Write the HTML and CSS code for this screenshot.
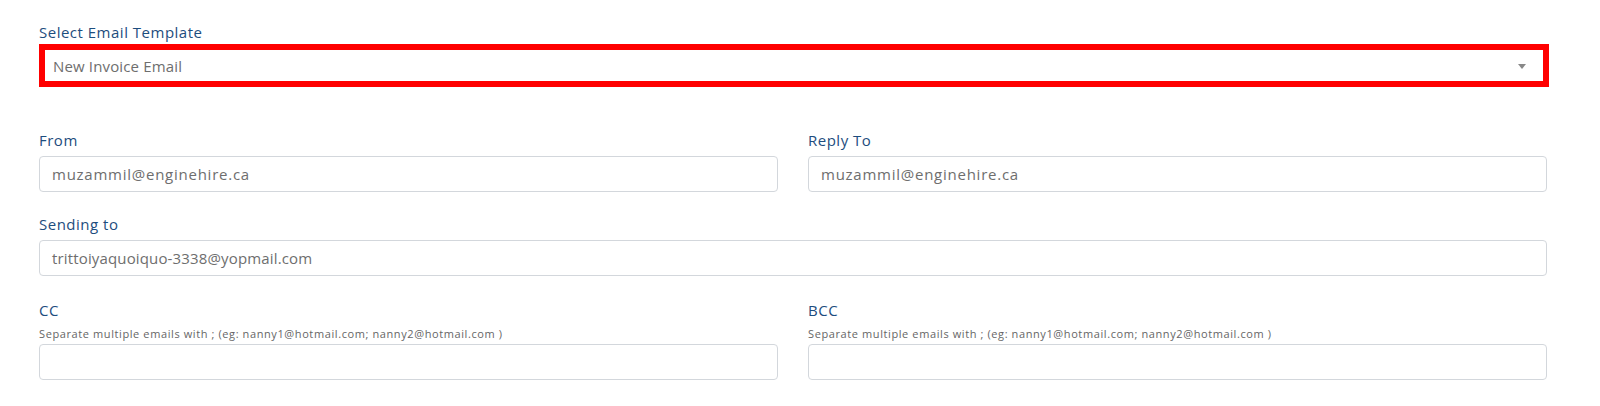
FILE: index.html
```html
<!DOCTYPE html>
<html>
<head>
<meta charset="utf-8">
<link rel="stylesheet" href="styles.css">
</head>
<body>
<div class="form">
  <div class="group template">
    <label class="label">Select Email Template</label>
    <div class="select-box">
      <span class="select-value">New Invoice Email</span>
      <span class="caret"></span>
    </div>
  </div>

  <div class="row first-row">
    <div class="group">
      <label class="label">From</label>
      <div class="input">muzammil@enginehire.ca</div>
    </div>
    <div class="group">
      <label class="label">Reply To</label>
      <div class="input">muzammil@enginehire.ca</div>
    </div>
  </div>

  <div class="group spaced">
    <label class="label">Sending to</label>
    <div class="input input-tight">trittoiyaquoiquo-3338@yopmail.com</div>
  </div>

  <div class="row spaced cc-row">
    <div class="group">
      <label class="label label-tight">CC</label>
      <div class="help">Separate multiple emails with ; (eg: nanny1@hotmail.com; nanny2@hotmail.com )</div>
      <div class="input"></div>
    </div>
    <div class="group">
      <label class="label label-tight">BCC</label>
      <div class="help">Separate multiple emails with ; (eg: nanny1@hotmail.com; nanny2@hotmail.com )</div>
      <div class="input"></div>
    </div>
  </div>
</div>
</body>
</html>
```

FILE: styles.css
```css
* { box-sizing: border-box; }
html, body { margin: 0; padding: 0; background: #ffffff; }
body {
  font-family: "Open Sans", Lato, sans-serif;
  color: #555;
}
.form {
  width: 1510px;
  margin-left: 39px;
  padding-top: 23px;
}
.group { display: flex; flex-direction: column; }
.label {
  display: block;
  font-size: 15px;
  font-weight: 500;
  line-height: 18px;
  letter-spacing: 0.5px;
  color: #1d4d7e;
  margin-bottom: 7px;
}
.template .label { margin-bottom: 3px; }
.select-box {
  height: 43px;
  border: 6px solid #ff0000;
  display: flex;
  align-items: center;
  justify-content: space-between;
  padding: 0 17px 0 8px;
  background: #fff;
}
.select-value {
  font-size: 15px;
  letter-spacing: 0.15px;
  color: #6e6e6e;
}
.caret {
  width: 0; height: 0;
  border-left: 4px solid transparent;
  border-right: 4px solid transparent;
  border-top: 5px solid #888;
  margin-top: 1px;
}
.row {
  display: grid;
  grid-template-columns: 1fr 1fr;
  column-gap: 30px;
  width: 1508px;
}
.first-row { margin-top: 44px; }
.spaced { margin-top: 23px; width: 1508px; }
.cc-row { margin-top: 25px; }
.input {
  height: 36px;
  border: 1px solid #d3d7dc;
  border-radius: 4px;
  padding: 0 12px;
  font-size: 15px;
  line-height: 34px;
  letter-spacing: 0.75px;
  color: #6e6e6e;
  background: #fff;
}
.input-tight { letter-spacing: 0.15px; }
.label-tight { margin-bottom: 8px; }
.help {
  font-size: 11px;
  line-height: 13px;
  letter-spacing: 0.6px;
  color: #666;
  margin-bottom: 4px;
}
```
